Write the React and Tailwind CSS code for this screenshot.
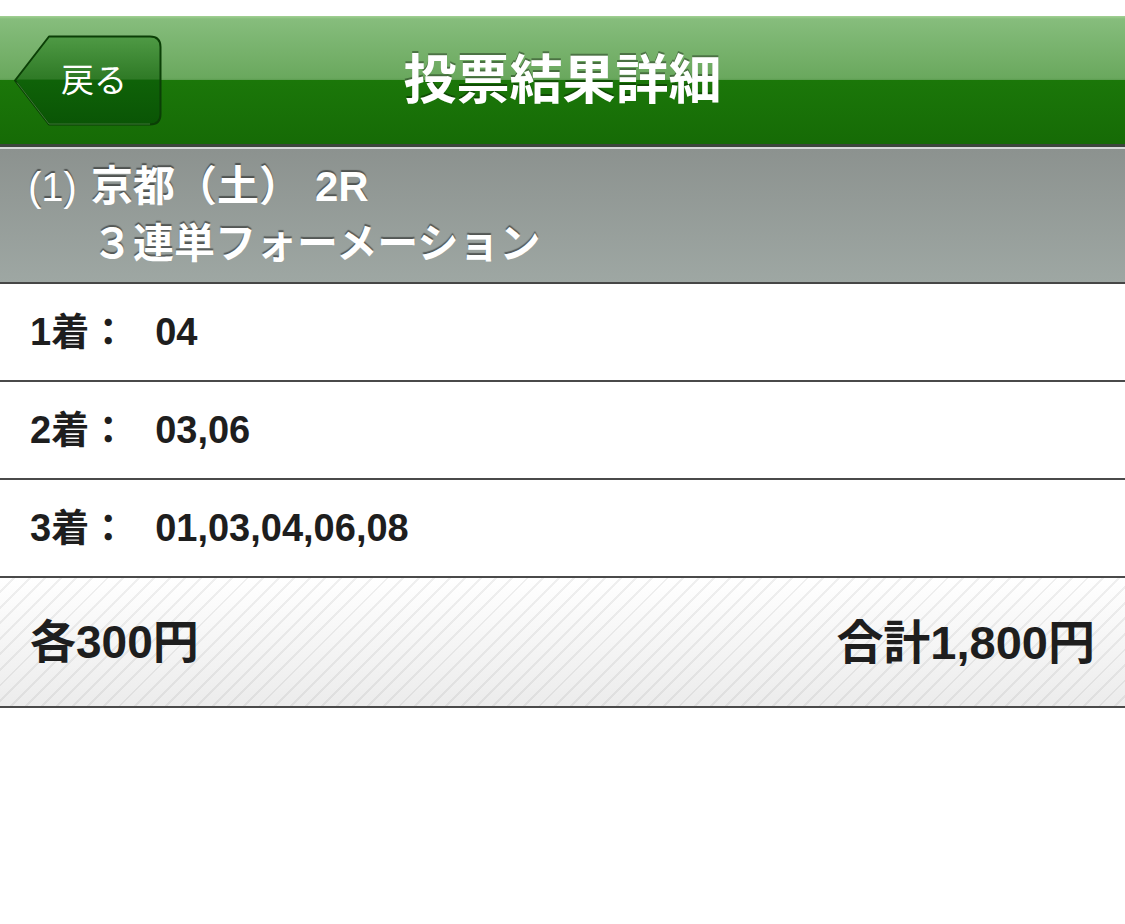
import React from 'react'

const font = { fontFamily: '"Liberation Sans", "Noto Sans CJK JP", sans-serif' }

function BackButton() {
  return (
    <button className="relative w-[148px] h-[91px] flex items-center justify-center">
      <svg className="absolute inset-0" width="148" height="91" viewBox="0 0 148 91">
        <defs>
          <linearGradient id="bb" x1="0" y1="0" x2="0" y2="1">
            <stop offset="0" stopColor="#4f9a45" />
            <stop offset="0.48" stopColor="#2f7a26" />
            <stop offset="0.5" stopColor="#0f6208" />
            <stop offset="1" stopColor="#0a5505" />
          </linearGradient>
        </defs>
        <path
          d="M1 45.5 L35 1.5 H136 Q146.5 1.5 146.5 12 V79 Q146.5 89.5 136 89.5 H35 Z"
          fill="url(#bb)"
          stroke="#0b3f06"
          strokeWidth="2"
          strokeLinejoin="round"
        />
        <path d="M3 47.5 L35 89 H136" fill="none" stroke="#5fa255" strokeWidth="1" opacity="0.6" />
      </svg>
      <span className="relative pl-[12px] text-white text-[33px] leading-none" style={font}>戻る</span>
    </button>
  )
}

function Row({ label, value }) {
  return (
    <div className="h-[98px] bg-white border-b-2 border-[#4a4a4a] flex items-center pl-[30px] gap-[28px] text-[#1e1e1e] text-[38px] font-bold leading-none">
      <span>{label}</span>
      <span>{value}</span>
    </div>
  )
}

export default function App() {
  return (
    <div className="w-[1125px] h-[924px] bg-white overflow-hidden" style={font}>
      <div className="h-[16px] bg-white" />

      {/* nav bar */}
      <div className="relative h-[128px] bg-[linear-gradient(to_bottom,#a2d194_0px,#86bd7c_3px,#6aa85e_62px,#5c9d50_64px,#1b7709_64px,#166b06_128px)] flex items-center px-[14px]">
        <BackButton />
        <h1 className="absolute inset-0 flex items-center justify-center text-white text-[53px] font-bold leading-none [text-shadow:0_-2px_0_rgba(0,0,0,0.35)]">
          投票結果詳細
        </h1>
      </div>
      <div className="h-[3px] bg-[#3d453d]" />
      <div className="h-[2px] bg-[#d6dad8]" />

      {/* race header */}
      <div className="h-[135px] bg-[linear-gradient(to_bottom,#8c928f,#9ea7a3)] border-b-2 border-[#464646] flex flex-col justify-center pl-[28px] text-white font-bold leading-none [text-shadow:0_-2px_1px_rgba(0,0,0,0.45)]">
        <div className="text-[42px] flex items-center">
          <span className="font-normal text-[40px]">(1)</span>
          <span className="ml-[14px]">京都（土）</span>
          <span className="ml-[14px]">2R</span>
        </div>
        <div className="text-[41px] mt-[16px] pl-[64px]">３連単フォーメーション</div>
      </div>

      <Row label="1着：" value="04" />
      <Row label="2着：" value="03,06" />
      <Row label="3着：" value="01,03,04,06,08" />

      {/* footer total */}
      <div className="h-[130px] border-b-2 border-[#4a4a4a] bg-[repeating-linear-gradient(135deg,rgba(0,0,0,0)_0px,rgba(0,0,0,0)_9px,rgba(0,0,0,0.06)_9px,rgba(0,0,0,0.06)_11px),linear-gradient(to_bottom,#ffffff,#ececec)] flex items-center justify-between px-[30px] text-[#1e1e1e] font-bold leading-none">
        <span className="text-[46px]">各300円</span>
        <span className="text-[47px]">合計1,800円</span>
      </div>
    </div>
  )
}
